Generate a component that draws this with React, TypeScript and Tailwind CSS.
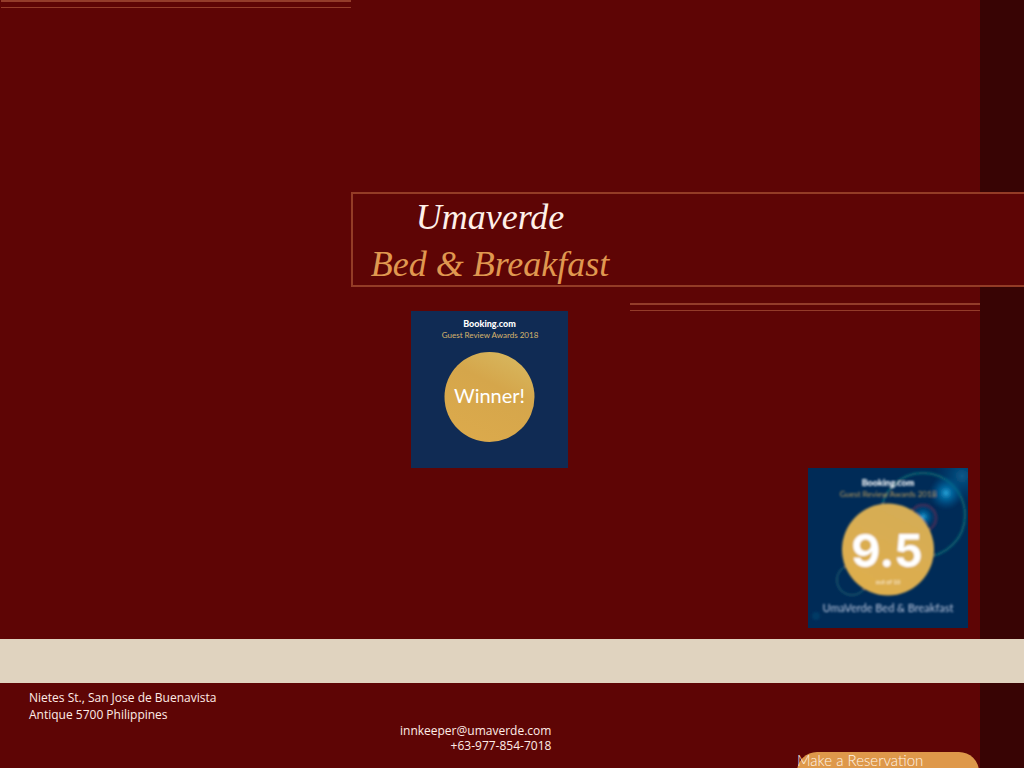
const sans = "font-['Open_Sans','Noto_Sans',sans-serif]";

function DoubleRule({ className = "" }: { className?: string }) {
  return <div aria-hidden="true" className={`h-2 w-[350px] border-t-2 border-b border-[#943c2a] ${className}`} />;
}

function WinnerBadge() {
  return (
    <svg role="img" aria-label="Guest Review Awards winner" viewBox="0 0 157 157" className="size-[157px]" fontFamily="Lato, sans-serif" textAnchor="middle">
      <defs>
        <linearGradient id="winnerGold" x1="0.2" y1="1" x2="0.7" y2="0">
          <stop offset="0" stopColor="#dcaa4c" />
          <stop offset="0.65" stopColor="#d5a64b" />
          <stop offset="1" stopColor="#d7b65d" />
        </linearGradient>
      </defs>
      <rect width="157" height="157" fill="#102b54" />
      <text x="78.5" y="15.5" fontSize="9" fontWeight="900" fill="#fff">Booking.com</text>
      <text x="79" y="27" fontSize="8" fill="#d8b56c">Guest Review Awards 2018</text>
      <circle cx="78.5" cy="86" r="45" fill="url(#winnerGold)" />
      <text x="78.5" y="91.5" fontSize="20" fill="#fff">Winner!</text>
    </svg>
  );
}

function ScoreBadge() {
  return (
    <svg role="img" aria-label="Guest review score" viewBox="0 0 160 160" className="size-40" fontFamily="Lato, sans-serif" textAnchor="middle">
      <defs>
        <filter id="soft" x="-20%" y="-20%" width="140%" height="140%">
          <feGaussianBlur stdDeviation="1" />
        </filter>
        <radialGradient id="flare">
          <stop offset="0" stopColor="#24a5da" />
          <stop offset="0.3" stopColor="#0875af" stopOpacity="0.85" />
          <stop offset="1" stopColor="#00528f" stopOpacity="0" />
        </radialGradient>
        <linearGradient id="scoreGold" x1="0.2" y1="1" x2="0.7" y2="0">
          <stop offset="0" stopColor="#dfae4d" />
          <stop offset="1" stopColor="#d5ad55" />
        </linearGradient>
      </defs>
      <rect width="160" height="160" fill="#002b57" />
      <g filter="url(#soft)">
        <circle cx="154" cy="8" r="28" fill="url(#flare)" opacity="0.4" />
        <circle cx="115" cy="47" r="42" fill="none" stroke="#0b6874" strokeWidth="2.5" opacity="0.75" />
        <circle cx="138" cy="25" r="17" fill="url(#flare)" />
        <circle cx="115" cy="50" r="13" fill="none" stroke="#503158" strokeWidth="3" opacity="0.7" />
        <circle cx="115" cy="49" r="12" fill="url(#flare)" />
        <circle cx="44" cy="112" r="15" fill="none" stroke="#164d68" strokeWidth="2" />
        <circle cx="8" cy="148" r="4" fill="#07446e" opacity="0.6" />
        <circle cx="80" cy="81.5" r="46" fill="url(#scoreGold)" />
        <text x="80" y="17.5" fontSize="9" fontWeight="900" fill="#fff">Booking.com</text>
        <text x="80" y="28.5" fontSize="8" fill="#bc9c5c">Guest Review Awards 2018</text>
        <text x="79" y="99" fontSize="45" fontFamily="Inter, sans-serif" fontWeight="700" fill="#fff">9.5</text>
        <text x="80" y="115.5" fontSize="6" fill="#fff3d8">out of 10</text>
        <text x="80" y="144" fontSize="11" fill="#b7c3db">UmaVerde Bed &amp; Breakfast</text>
      </g>
    </svg>
  );
}

export default function App() {
  return (
    <div className={`flex h-screen flex-col overflow-hidden bg-[#380404] ${sans}`}>
      <main className="flex shrink-0 flex-col bg-[linear-gradient(to_right,#5e0505_calc(100%_-_44px),#380404_calc(100%_-_44px))]">
        <DoubleRule className="ml-px" />
        <header className="mt-46 ml-[351px] border-2 border-r-0 border-[#943c26] bg-[#5e0505] pt-[3px] pb-px">
          <h1 className="flex w-[274px] flex-col gap-[7px] text-center font-['Liberation_Serif',serif] text-4xl leading-10 whitespace-nowrap italic">
            <span className="text-[#fff0e9]">Umaverde</span>
            <span className="text-[#e09850]">Bed &amp; Breakfast</span>
          </h1>
        </header>
        <DoubleRule className="mt-4 mr-11 self-end" />
        <div className="mr-[46px] flex justify-center">
          <WinnerBadge />
        </div>
        <div className="mr-14 mb-[11px] self-end">
          <ScoreBadge />
        </div>
      </main>
      <div className="h-11 shrink-0 bg-[#e0d3bf]" />
      <footer className="mr-11 flex min-h-28 grow items-start bg-[#5e0505] pl-[29px] text-xs text-[#ffece7]">
        <address className="w-[371px] pt-1.5 leading-[17px] not-italic">
          Nietes St., San Jose de Buenavista
          <br />
          Antique 5700 Philippines
        </address>
        <div className="flex flex-col items-end pt-10 leading-[15px]">
          <a href="mailto:innkeeper@umaverde.com">innkeeper@umaverde.com</a>
          <a href="tel:+639778547018">+63-977-854-7018</a>
        </div>
        <button type="button" className="mt-[69px] mr-px ml-auto flex h-10 w-[182px] items-start rounded-[20px] bg-[#de984a] text-left font-['Lato',sans-serif] text-[15px] leading-4 font-light text-[#fff4e6]">
          Make a Reservation
        </button>
      </footer>
    </div>
  );
}
